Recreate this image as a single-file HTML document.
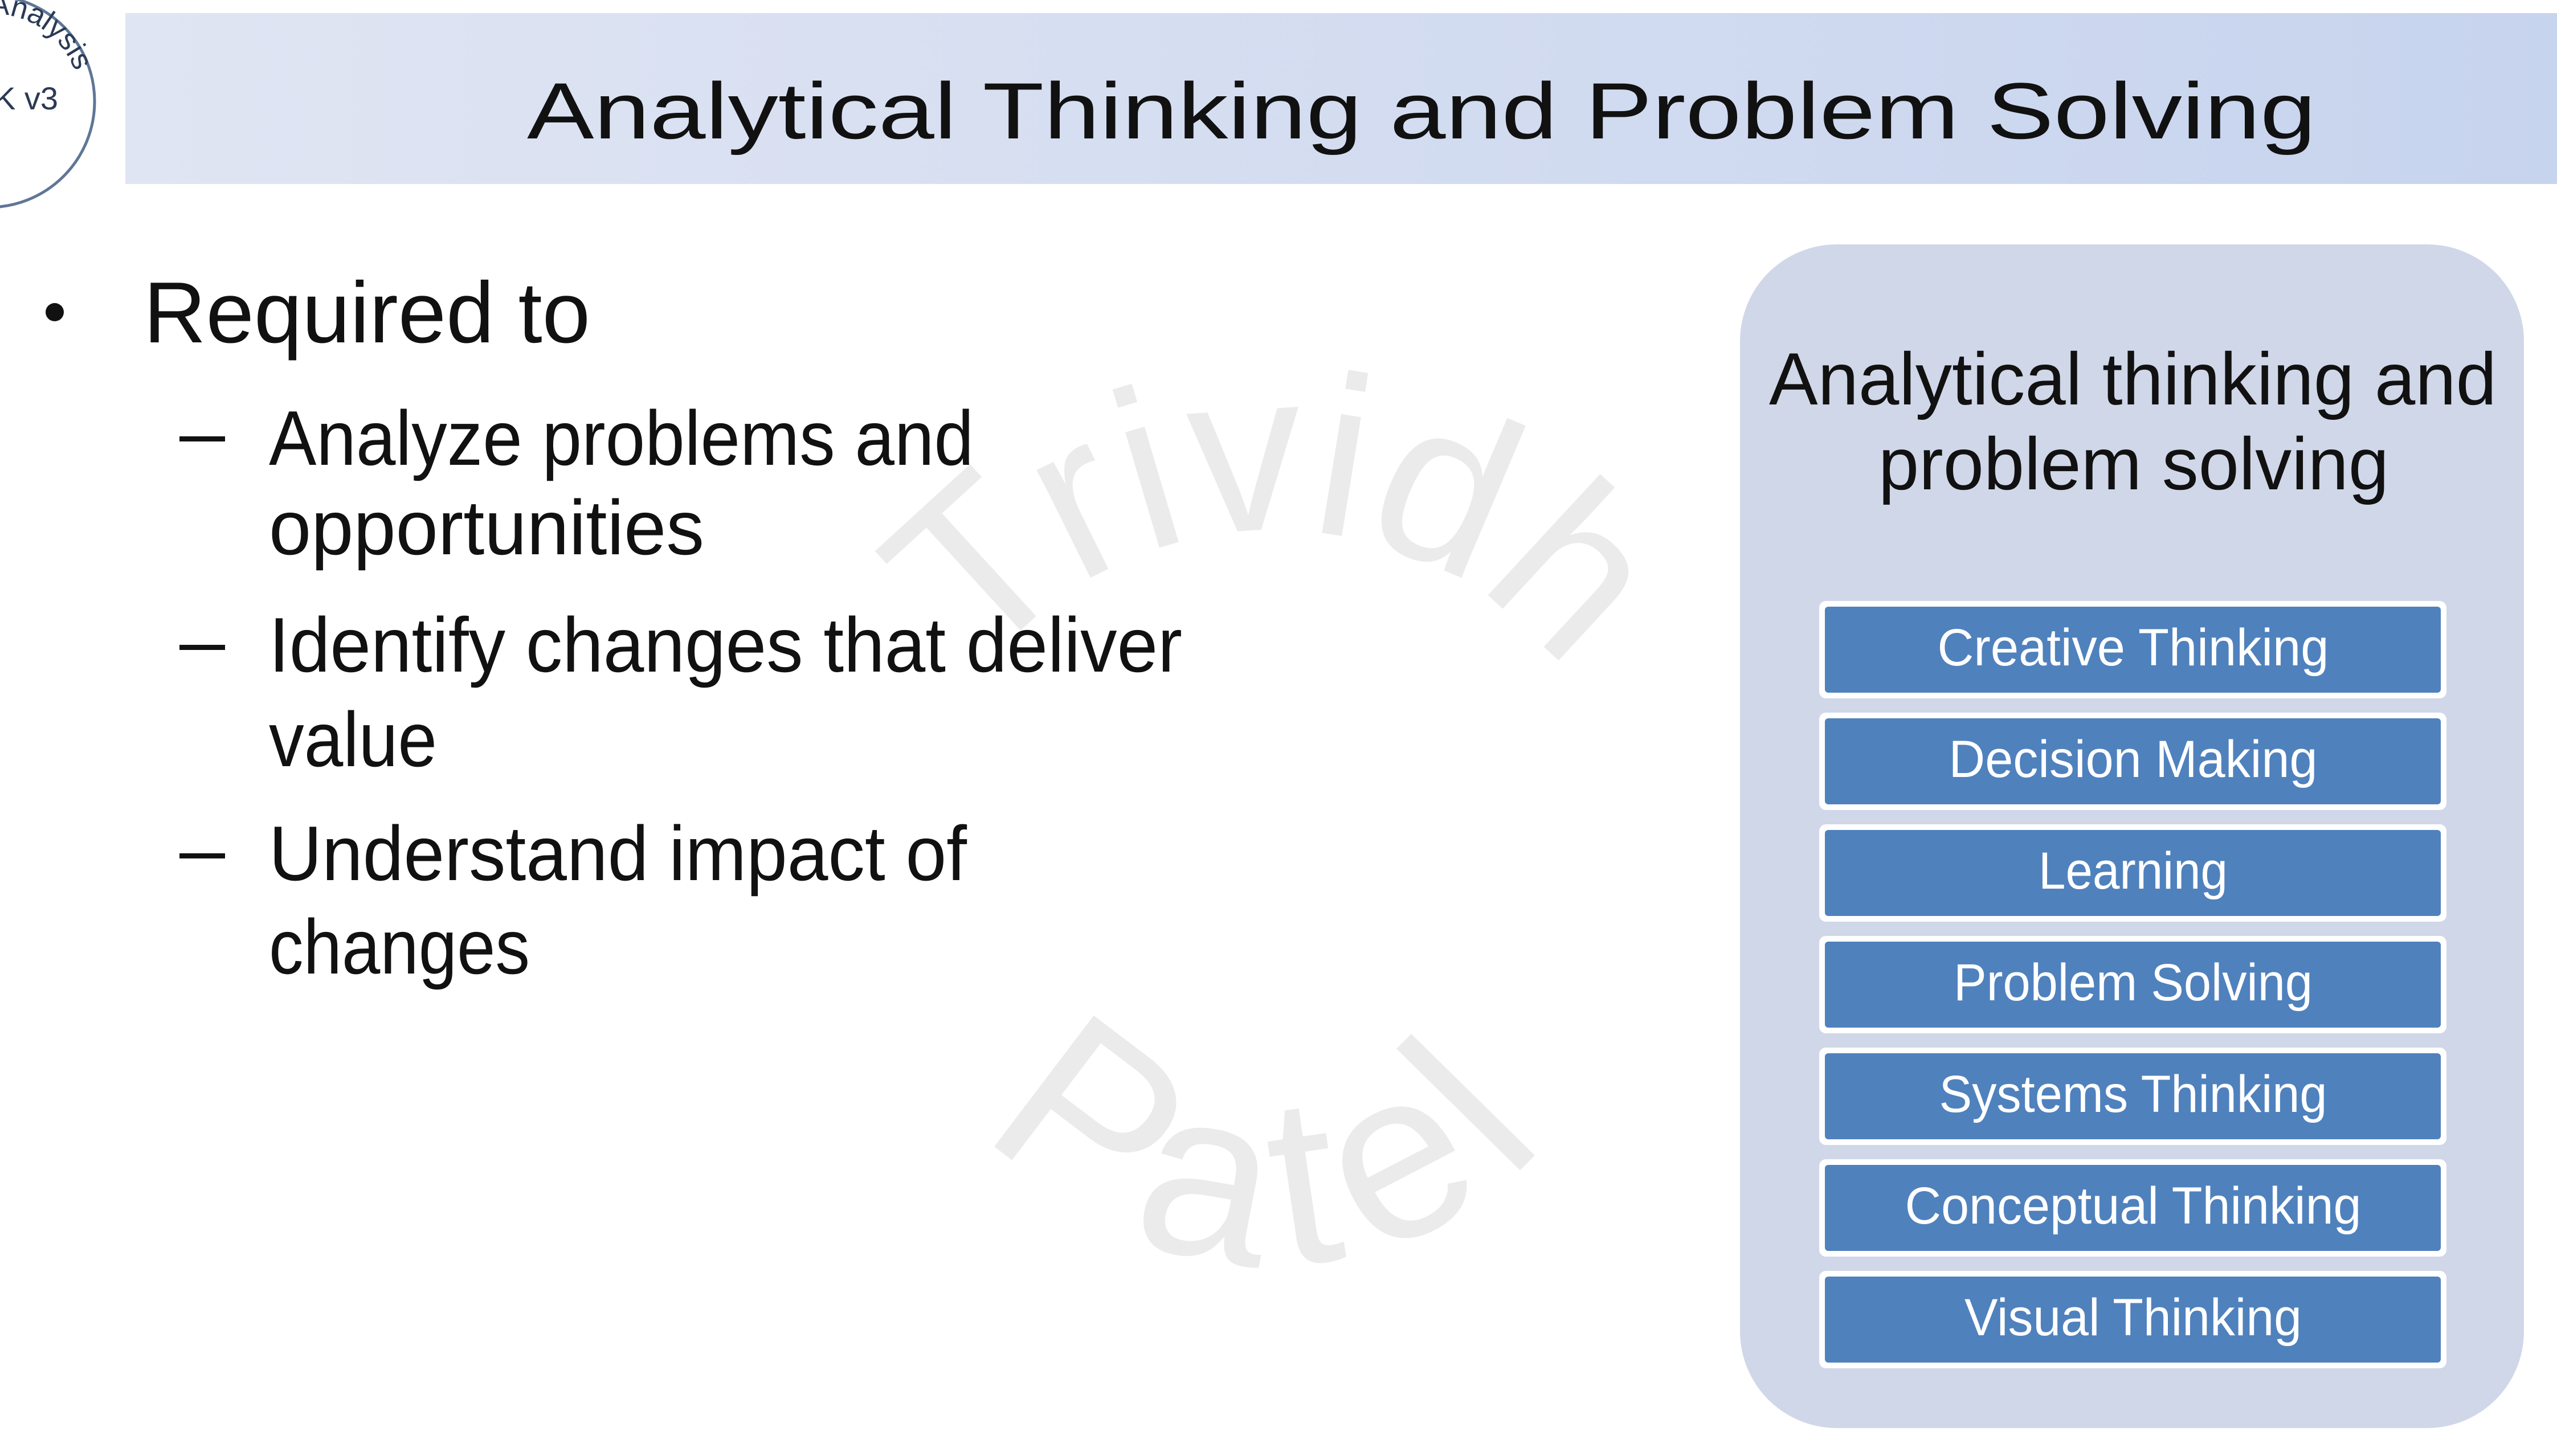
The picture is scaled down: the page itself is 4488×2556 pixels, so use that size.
<!DOCTYPE html>
<html><head><meta charset="utf-8"><style>
html,body{margin:0;padding:0;background:#fff;}
svg{display:block}
text{font-family:"Liberation Sans",sans-serif;}
</style></head><body>
<svg width="4488" height="2556" viewBox="0 0 4488 2556" xmlns="http://www.w3.org/2000/svg">
<defs>
<linearGradient id="tb" x1="0" x2="1" y1="0" y2="0">
<stop offset="0" stop-color="#e0e5f3"/><stop offset="1" stop-color="#c7d4ee"/>
</linearGradient>
<path id="arcTop" d="M1590,1575 A645,645 0 0 1 2880,1575"/>
<path id="arcBot" d="M1590,1575 A645,645 0 0 0 2880,1575"/>
<path id="lgTop" d="M-160,175 A150,150 0 0 1 140,175"/>
<path id="lgBot" d="M-180,175 A175,175 0 0 0 170,175"/>
</defs>
<rect width="4488" height="2556" fill="#fff"/>
<!-- logo -->
<circle cx="-20" cy="178" r="186" fill="#fff" stroke="#5f7696" stroke-width="5"/>
<text font-size="52" fill="#2b3a55"><textPath href="#lgTop" startOffset="62%" text-anchor="middle">ss Analysis</textPath></text>
<text x="-10" y="192" font-size="56" fill="#2b3a55">K v3</text>
<text font-size="52" fill="#2b3a55"><textPath href="#lgBot" startOffset="28%" text-anchor="middle">ation</textPath></text>
<!-- title bar -->
<rect x="220" y="23" width="4268" height="300" fill="url(#tb)"/>
<text x="925" y="243" font-size="140" fill="#111" textLength="3140" lengthAdjust="spacingAndGlyphs">Analytical Thinking and Problem Solving</text>
<!-- watermark -->
<text font-size="400" fill="#ebebeb"><textPath href="#arcTop" startOffset="50%" text-anchor="middle">Trividh</textPath></text>
<text font-size="420" fill="#ebebeb" letter-spacing="40"><textPath href="#arcBot" startOffset="50%" text-anchor="middle">Patel</textPath></text>
<!-- bullets -->
<circle cx="96" cy="548" r="16" fill="#111"/>
<text x="252" y="601" font-size="152" fill="#111" textLength="784" lengthAdjust="spacingAndGlyphs">Required to</text>
<g font-size="136" fill="#111">
<rect x="315" y="766" width="80" height="9"/>
<text x="472" y="816" textLength="1237" lengthAdjust="spacingAndGlyphs">Analyze problems and</text>
<text x="472" y="973" textLength="764" lengthAdjust="spacingAndGlyphs">opportunities</text>
<rect x="315" y="1132" width="80" height="9"/>
<text x="472" y="1179" textLength="1603" lengthAdjust="spacingAndGlyphs">Identify changes that deliver</text>
<text x="472" y="1345" textLength="295" lengthAdjust="spacingAndGlyphs">value</text>
<rect x="315" y="1498" width="80" height="9"/>
<text x="472" y="1545" textLength="1225" lengthAdjust="spacingAndGlyphs">Understand impact of</text>
<text x="472" y="1709" textLength="458" lengthAdjust="spacingAndGlyphs">changes</text>
</g>
<!-- panel -->
<rect x="3054" y="429" width="1376" height="2078" rx="170" fill="#d0d7e8"/>
<text x="3105" y="710" font-size="130" fill="#111" textLength="1277" lengthAdjust="spacingAndGlyphs">Analytical thinking and</text>
<text x="3297" y="859" font-size="130" fill="#111" textLength="896" lengthAdjust="spacingAndGlyphs">problem solving</text>
<g font-size="92" fill="#fff" text-anchor="middle">
<rect x="3193" y="1055" width="1101" height="171" rx="12" fill="#fff"/><rect x="3203" y="1065" width="1081" height="151" rx="6" fill="#4f81bd"/>
<text x="3744" y="1168" textLength="687" lengthAdjust="spacingAndGlyphs">Creative Thinking</text>
<rect x="3193" y="1251" width="1101" height="171" rx="12" fill="#fff"/><rect x="3203" y="1261" width="1081" height="151" rx="6" fill="#4f81bd"/>
<text x="3744" y="1364" textLength="647" lengthAdjust="spacingAndGlyphs">Decision Making</text>
<rect x="3193" y="1447" width="1101" height="171" rx="12" fill="#fff"/><rect x="3203" y="1457" width="1081" height="151" rx="6" fill="#4f81bd"/>
<text x="3744" y="1560" textLength="332" lengthAdjust="spacingAndGlyphs">Learning</text>
<rect x="3193" y="1643" width="1101" height="171" rx="12" fill="#fff"/><rect x="3203" y="1653" width="1081" height="151" rx="6" fill="#4f81bd"/>
<text x="3744" y="1756" textLength="630" lengthAdjust="spacingAndGlyphs">Problem Solving</text>
<rect x="3193" y="1839" width="1101" height="171" rx="12" fill="#fff"/><rect x="3203" y="1849" width="1081" height="151" rx="6" fill="#4f81bd"/>
<text x="3744" y="1952" textLength="681" lengthAdjust="spacingAndGlyphs">Systems Thinking</text>
<rect x="3193" y="2035" width="1101" height="171" rx="12" fill="#fff"/><rect x="3203" y="2045" width="1081" height="151" rx="6" fill="#4f81bd"/>
<text x="3744" y="2148" textLength="801" lengthAdjust="spacingAndGlyphs">Conceptual Thinking</text>
<rect x="3193" y="2231" width="1101" height="171" rx="12" fill="#fff"/><rect x="3203" y="2241" width="1081" height="151" rx="6" fill="#4f81bd"/>
<text x="3744" y="2344" textLength="592" lengthAdjust="spacingAndGlyphs">Visual Thinking</text>
</g>
</svg>
</body></html>
